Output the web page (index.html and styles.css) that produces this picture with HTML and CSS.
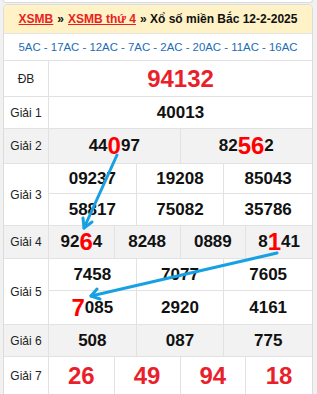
FILE: index.html
```html
<!DOCTYPE html>
<html lang="vi">
<head>
<meta charset="utf-8">
<link rel="stylesheet" href="styles.css">
</head>
<body>
<div class="page">
  <div class="prev-card"></div>
  <div class="card">
    <div class="title"><a href="#">XSMB</a> » <a href="#">XSMB thứ 4</a> » Xổ số miền Bắc 12-2-2025</div>
    <div class="codes">5AC - 17AC - 12AC - 7AC - 2AC - 20AC - 11AC - 16AC</div>

    <div class="row h36">
      <div class="label">ĐB</div>
      <div class="nums c1"><div class="cell big red">94132</div></div>
    </div>
    <div class="row h32">
      <div class="label">Giải 1</div>
      <div class="nums c1"><div class="cell">40013</div></div>
    </div>
    <div class="row h35 alt">
      <div class="label">Giải 2</div>
      <div class="nums c2">
        <div class="cell">44<span class="hl">0</span>97</div>
        <div class="cell">82<span class="hl">56</span>2</div>
      </div>
    </div>
    <div class="row">
      <div class="label">Giải 3</div>
      <div class="nums c3 r31">
        <div class="cell">09237</div>
        <div class="cell">19208</div>
        <div class="cell">85043</div>
        <div class="cell">58817</div>
        <div class="cell">75082</div>
        <div class="cell">35786</div>
      </div>
    </div>
    <div class="row h33 alt">
      <div class="label">Giải 4</div>
      <div class="nums c4">
        <div class="cell">92<span class="hl">6</span>4</div>
        <div class="cell">8248</div>
        <div class="cell">0889</div>
        <div class="cell">8<span class="hl">1</span>41</div>
      </div>
    </div>
    <div class="row">
      <div class="label">Giải 5</div>
      <div class="nums c3 r33">
        <div class="cell">7458</div>
        <div class="cell">7077</div>
        <div class="cell">7605</div>
        <div class="cell"><span class="hl">7</span>085</div>
        <div class="cell">2920</div>
        <div class="cell">4161</div>
      </div>
    </div>
    <div class="row h32 alt">
      <div class="label">Giải 6</div>
      <div class="nums c3">
        <div class="cell">508</div>
        <div class="cell">087</div>
        <div class="cell">775</div>
      </div>
    </div>
    <div class="row h38">
      <div class="label">Giải 7</div>
      <div class="nums c4">
        <div class="cell big red">26</div>
        <div class="cell big red">49</div>
        <div class="cell big red">94</div>
        <div class="cell big red">18</div>
      </div>
    </div>
  </div>

  <svg class="arrows" width="317" height="394" viewBox="0 0 317 394">
    <g fill="none" stroke="#17a0e2" stroke-width="3" stroke-linecap="round" stroke-linejoin="round">
      <line x1="117" y1="155" x2="84" y2="228"/>
      <polyline points="83,218 84,228 92,222"/>
      <line x1="277" y1="253" x2="91" y2="296"/>
      <polyline points="97,289 91,296 100,299"/>
    </g>
  </svg>
</div>
</body>
</html>
```

FILE: styles.css
```css
* { box-sizing: border-box; }
html, body { margin: 0; padding: 0; }
body {
  background: #f1f1f1;
  font-family: "Liberation Sans", Arial, sans-serif;
  color: #111;
  overflow: hidden;
}
.page {
  position: relative;
  width: 317px;
  height: 394px;
  padding: 0 4px 0 3px;
}
.prev-card {
  height: 3px;
  background: #fff;
  border: 1px solid #dcdcdc;
  border-top: none;
  border-radius: 0 0 5px 5px;
  margin-bottom: 1px;
}
.card {
  background: #fff;
  border: 1px solid #dcdcdc;
  border-bottom: none;
  border-radius: 5px 5px 0 0;
  overflow: hidden;
}
.title {
  height: 29px;
  background: #fff2c6;
  font-size: 12px;
  font-weight: bold;
  display: flex;
  align-items: center;
  justify-content: center;
  gap: 4px;
  border-bottom: 1px solid #e4e4e4;
  white-space: nowrap;
}
.title a { color: #e8231f; text-decoration: underline; }
.codes {
  height: 27px;
  display: flex;
  align-items: center;
  justify-content: center;
  font-size: 11.4px;
  color: #1d6cb5;
  border-bottom: 1px solid #e2e2e2;
  white-space: nowrap;
}
.row {
  display: grid;
  grid-template-columns: 45px 1fr;
  border-bottom: 1px solid #e2e2e2;
}
.row.alt { background: #f2f2f2; }
.h32 { height: 32px; }
.h33 { height: 33px; }
.h35 { height: 35px; }
.h36 { height: 36px; }
.h38 { height: 38px; }
.label {
  display: flex;
  align-items: center;
  justify-content: center;
  font-size: 12px;
  color: #222;
  border-right: 1px solid #e2e2e2;
}
.nums { display: grid; }
.c1 { grid-template-columns: 1fr; }
.c2 { grid-template-columns: repeat(2, 1fr); }
.c3 { grid-template-columns: repeat(3, 1fr); }
.c4 { grid-template-columns: repeat(4, 1fr); }
.r31 { grid-template-rows: 30px 31px; }
.r33 { grid-template-rows: 32px 33px; }
.r31 .cell:nth-child(-n+3), .r33 .cell:nth-child(-n+3) { border-bottom: 1px solid #e2e2e2; }
.cell {
  display: flex;
  align-items: center;
  justify-content: center;
  font-size: 17px;
  font-weight: bold;
  color: #111;
  border-right: 1px solid #e2e2e2;
  white-space: nowrap;
}
.cell:last-child, .c3 .cell:nth-child(3n) { border-right: none; }
.cell.big { font-size: 24px; }
.cell.red { color: #ea1f2c; }
.hl {
  color: #ff0000;
  font-size: 24px;
  line-height: 1;
}
.arrows {
  position: absolute;
  left: 0;
  top: 0;
  pointer-events: none;
}
```
